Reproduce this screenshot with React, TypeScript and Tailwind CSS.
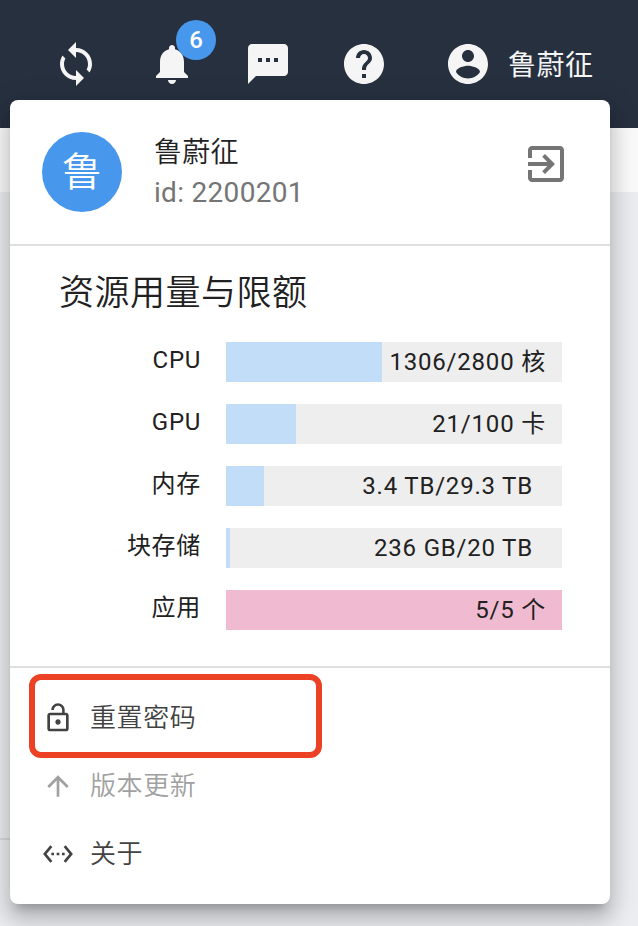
import type { ReactNode } from "react";

const paths = {
  sync: "M12 4V1L8 5l4 4V6c3.31 0 6 2.69 6 6 0 1.01-.25 1.97-.7 2.8l1.46 1.46C19.54 15.03 20 13.57 20 12c0-4.42-3.58-8-8-8zm0 14c-3.31 0-6-2.69-6-6 0-1.01.25-1.97.7-2.8L5.24 7.74C4.46 8.97 4 10.43 4 12c0 4.42 3.58 8 8 8v3l4-4-4-4v3z",
  bell: "M12 22c1.1 0 2-.9 2-2h-4c0 1.1.89 2 2 2zm6-6v-5c0-3.07-1.64-5.64-4.5-6.32V4c0-.83-.67-1.5-1.5-1.5s-1.5.67-1.5 1.5v.68C7.63 5.36 6 7.92 6 11v5l-2 2v1h16v-1l-2-2z",
  sms: "M20 2H4c-1.1 0-1.99.9-1.99 2L2 22l4-4h14c1.1 0 2-.9 2-2V4c0-1.1-.9-2-2-2zM9 11H7V9h2v2zm4 0h-2V9h2v2zm4 0h-2V9h2v2z",
  help: "M12 2C6.48 2 2 6.48 2 12s4.48 10 10 10 10-4.48 10-10S17.52 2 12 2zm1 17h-2v-2h2v2zm2.07-7.75l-.9.92C13.45 12.9 13 13.5 13 15h-2v-.5c0-1.1.45-2.1 1.17-2.83l1.24-1.26c.37-.36.59-.86.59-1.41 0-1.1-.9-2-2-2s-2 .9-2 2H8c0-2.21 1.79-4 4-4s4 1.79 4 4c0 .88-.36 1.68-.93 2.25z",
  account: "M12 2C6.48 2 2 6.48 2 12s4.48 10 10 10 10-4.48 10-10S17.52 2 12 2zm0 3c1.66 0 3 1.34 3 3s-1.34 3-3 3-3-1.34-3-3 1.34-3 3-3zm0 14.2c-2.5 0-4.71-1.28-6-3.22.03-1.99 4-3.08 6-3.08 1.99 0 5.97 1.09 6 3.08-1.29 1.94-3.5 3.22-6 3.22z",
  exit: "M10.09 15.59L11.5 17l5-5-5-5-1.41 1.41L12.67 11H3v2h9.67l-2.58 2.59zM19 3H5c-1.11 0-2 .9-2 2v4h2V5h14v14H5v-4H3v4c0 1.1.89 2 2 2h14c1.1 0 2-.9 2-2V5c0-1.1-.9-2-2-2z",
  lockOpen: "M12 17c1.1 0 2-.9 2-2s-.9-2-2-2-2 .9-2 2 .9 2 2 2zm6-9h-1V6c0-2.76-2.24-5-5-5S7 3.24 7 6h1.9c0-1.71 1.39-3.1 3.1-3.1 1.71 0 3.1 1.39 3.1 3.1v2H6c-1.1 0-2 .9-2 2v10c0 1.1.9 2 2 2h12c1.1 0 2-.9 2-2V10c0-1.1-.9-2-2-2zm0 12H6V10h12v10z",
  arrowUp: "M4 12l1.41 1.41L11 7.83V20h2V7.83l5.58 5.59L20 12l-8-8-8 8z",
  ethernet: "M7.77 6.76L6.23 5.48.82 12l5.41 6.52 1.54-1.28L3.42 12l4.35-5.24zM7 13h2v-2H7v2zm10-2h-2v2h2v-2zm-6 2h2v-2h-2v2zm6.77-7.52l-1.54 1.28L20.58 12l-4.35 5.24 1.54 1.28L23.18 12l-5.41-6.52z",
};

function Icon({ name, className }: { name: keyof typeof paths; className: string }) {
  return (
    <svg viewBox="0 0 24 24" fill="currentColor" className={`shrink-0 ${className}`}>
      <path d={paths[name]} />
    </svg>
  );
}

const usage = [
  { label: "CPU", value: "1306/2800 核", width: 156, full: false, unitPad: "pr-4" },
  { label: "GPU", value: "21/100 卡", width: 70, full: false, unitPad: "pr-4" },
  { label: "内存", value: "3.4 TB/29.3 TB", width: 38, full: false, unitPad: "pr-[29px]" },
  { label: "块存储", value: "236 GB/20 TB", width: 4, full: false, unitPad: "pr-[29px]" },
  { label: "应用", value: "5/5 个", width: 336, full: true, unitPad: "pr-4" },
];

function UsageRow({ row }: { row: (typeof usage)[number] }) {
  return (
    <div className="flex h-10">
      <div className="w-[191px] pt-[2px] text-right text-2xl leading-8 tracking-[0.7px]">{row.label}</div>
      <div className="ml-[25px] grid w-[336px] bg-[#eeeeee]">
        <div
          className={`col-start-1 row-start-1 ${row.full ? "bg-[#f0bbd0]" : "bg-[#c2ddf8]"}`}
          style={{ width: row.width }}
        />
        <div className={`col-start-1 row-start-1 text-right text-2xl leading-10 tracking-[0.8px] ${row.unitPad}`}>
          {row.value}
        </div>
      </div>
    </div>
  );
}

function MenuItem({ icon, children, tone }: { icon: keyof typeof paths; children: ReactNode; tone: string }) {
  return (
    <div className={`flex h-[68px] items-center pl-8 ${tone}`}>
      <Icon name={icon} className="size-8" />
      <span className="ml-4 text-[26px] leading-8 font-[350] tracking-[0.6px]">{children}</span>
    </div>
  );
}

export default function App() {
  return (
    <div className="relative h-[926px] w-[638px] overflow-hidden bg-[#ebedf0] font-['Roboto','Noto_Sans_CJK_SC',sans-serif] text-[#212121]">
      <header className="flex h-32 items-center bg-[#27303f] pl-[52px] text-[#f5f5f5]">
        <Icon name="sync" className="size-12" />
        <div className="relative ml-12">
          <Icon name="bell" className="size-12" />
          <span className="absolute -top-5 left-7 flex size-10 items-center justify-center rounded-full bg-[#4797ec] text-2xl font-medium text-white">
            6
          </span>
        </div>
        <Icon name="sms" className="ml-12 size-12" />
        <Icon name="help" className="ml-12 size-12" />
        <Icon name="account" className="ml-14 size-12" />
        <span className="ml-4 pt-[3px] text-[28px] tracking-[0.5px]">鲁蔚征</span>
      </header>
      <div className="h-16 bg-[#fafafa]" />
      <div className="mt-[646px] h-[2px] w-5 bg-[#d8d9db]" />

      <div className="absolute top-[100px] left-[10px] h-[804px] w-[600px] rounded-lg bg-white shadow-[0_10px_10px_-6px_rgba(0,0,0,0.2),0_16px_20px_2px_rgba(0,0,0,0.14),0_6px_28px_4px_rgba(0,0,0,0.12)]">
        <div className="flex h-[146px] border-b-2 border-[#e0e0e0] pt-8 pl-8">
          <div className="flex size-20 items-center justify-center rounded-full bg-[#4797ec] pt-[2px] text-[40px] font-[350] text-white">
            鲁
          </div>
          <div className="ml-8 w-[368px] pt-px">
            <div className="text-[28px] leading-10 font-[350] tracking-[0.3px]">鲁蔚征</div>
            <div className="text-[28px] leading-10 tracking-[0.3px] text-[#757575]">id: 2200201</div>
          </div>
          <Icon name="exit" className="mt-2 size-12 text-[#757575]" />
        </div>

        <div className="h-[422px] border-b-2 border-[#e0e0e0] pt-[26px]">
          <h2 className="pl-[49px] text-[35px] leading-[44px] font-[350] tracking-[0.5px]">资源用量与限额</h2>
          <div className="mt-[26px] flex flex-col gap-[22px]">
            {usage.map((row) => (
              <UsageRow key={row.label} row={row} />
            ))}
          </div>
        </div>

        <div className="pt-4">
          <MenuItem icon="lockOpen" tone="text-[#424242]">重置密码</MenuItem>
          <MenuItem icon="arrowUp" tone="text-[#a0a0a0]">版本更新</MenuItem>
          <MenuItem icon="ethernet" tone="text-[#424242]">关于</MenuItem>
        </div>

        <div className="absolute top-[574px] left-[19px] h-[84px] w-[293px] rounded-xl border-6 border-[#ec4125]" />
      </div>
    </div>
  );
}
